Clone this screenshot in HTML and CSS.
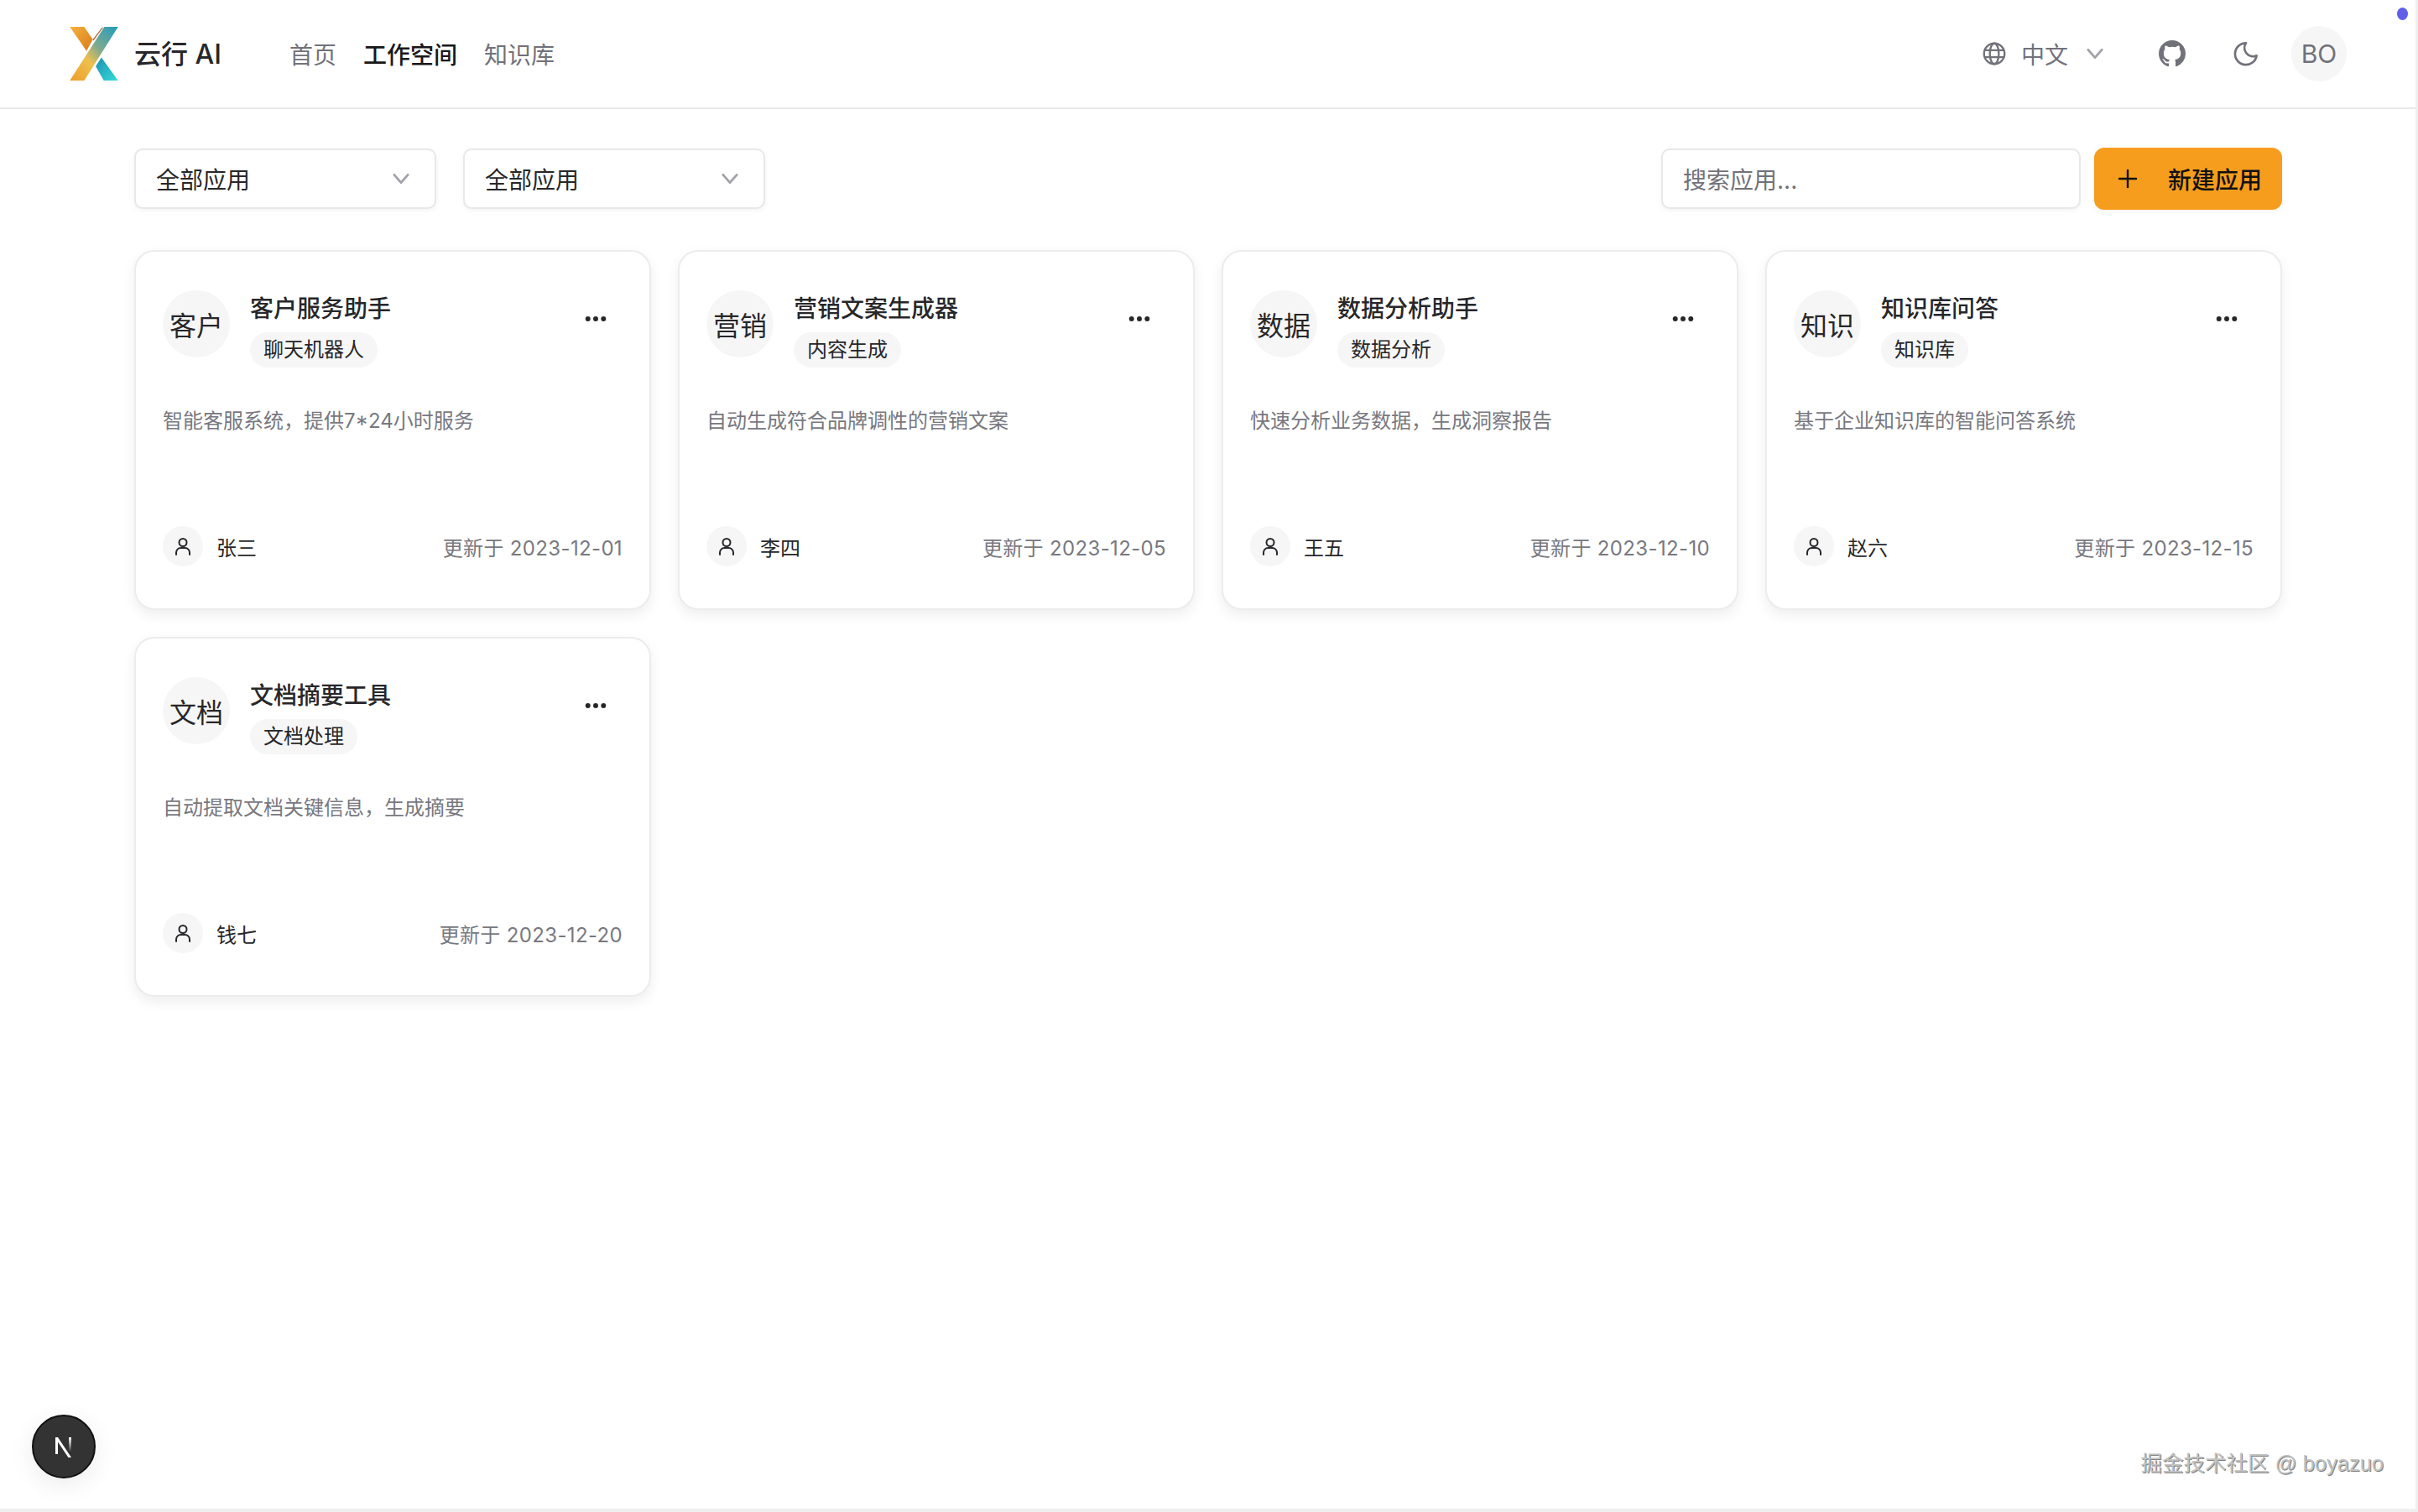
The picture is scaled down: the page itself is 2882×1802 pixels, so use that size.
FILE: index.html
```html
<!DOCTYPE html>
<html lang="zh-CN">
<head>
<meta charset="utf-8">
<title>云行 AI</title>
<link rel="stylesheet" href="styles.css">
</head>
<body>
<div class="page">
  <header class="header">
    <div class="brand">
      <svg class="logo" viewBox="0 0 168 187">
        <defs>
          <linearGradient id="lgA" x1="0" y1="0" x2="1" y2="1"><stop offset="0" stop-color="#f6b23a"/><stop offset="1" stop-color="#d87a1e"/></linearGradient>
          <linearGradient id="lgB" x1="1" y1="0" x2="0" y2="1"><stop offset="0" stop-color="#1f9cc0"/><stop offset=".4" stop-color="#7fa98e"/><stop offset=".62" stop-color="#eec04e"/><stop offset="1" stop-color="#eb9d2c"/></linearGradient>
          <linearGradient id="lgC" x1="0" y1="0" x2="1" y2="1"><stop offset="0" stop-color="#1d8fb4"/><stop offset="1" stop-color="#36dcd6"/></linearGradient>
        </defs>
        <polygon points="0,0 50,0 80,44 58,84" fill="url(#lgA)"/>
        <polygon points="120,0 168,0 50,187 0,187" fill="url(#lgB)"/>
        <polygon points="110,107 168,187 118,187 90,137" fill="url(#lgC)"/>
        <polygon points="112,2 116,2 82,48 80,44" fill="#a8672a"/>
      </svg>
      <span class="brand-name">云行 AI</span>
    </div>
    <nav class="nav">
      <a class="nav-link">首页</a>
      <a class="nav-link active">工作空间</a>
      <a class="nav-link">知识库</a>
    </nav>
    <div class="tools">
      <div class="lang">
        <svg class="icon-globe" viewBox="0 0 24 24" fill="none" stroke="currentColor" stroke-width="2"><circle cx="12" cy="12" r="10.5"/><ellipse cx="12" cy="12" rx="4.6" ry="10.5"/><path d="M2 8.5h20M2 15.5h20"/></svg>
        <span class="lang-text">中文</span>
        <svg class="chev chev-lang" viewBox="0 0 24 24" fill="none" stroke="currentColor" stroke-width="2.4" stroke-linecap="round" stroke-linejoin="round"><path d="M5 8l7 8 7-8"/></svg>
      </div>
      <svg class="icon-github" viewBox="0 0 16 16" fill="currentColor"><path d="M8 0C3.58 0 0 3.58 0 8c0 3.54 2.29 6.53 5.47 7.59.4.07.55-.17.55-.38 0-.19-.01-.82-.01-1.49-2.01.37-2.53-.49-2.69-.94-.09-.23-.48-.94-.82-1.13-.28-.15-.68-.52-.01-.53.63-.01 1.08.58 1.23.82.72 1.21 1.87.87 2.33.66.07-.52.28-.87.51-1.07-1.78-.2-3.64-.89-3.64-3.95 0-.87.31-1.59.82-2.15-.08-.2-.36-1.02.08-2.12 0 0 .67-.21 2.2.82.64-.18 1.32-.27 2-.27s1.36.09 2 .27c1.53-1.04 2.2-.82 2.2-.82.44 1.1.16 1.92.08 2.12.51.56.82 1.27.82 2.15 0 3.07-1.87 3.75-3.65 3.95.29.25.54.73.54 1.48 0 1.07-.01 1.93-.01 2.2 0 .21.15.46.55.38A8.01 8.01 0 0 0 16 8c0-4.42-3.58-8-8-8z"/></svg>
      <svg class="icon-moon" viewBox="0 0 24 24" fill="none" stroke="currentColor" stroke-width="2" stroke-linecap="round" stroke-linejoin="round"><path d="M12 2.5a7.6 7.6 0 0 0 9.5 11.2A9.7 9.7 0 1 1 12 2.5z"/></svg>
      <div class="me">BO</div>
    </div>
  </header>

  <main class="main">
    <div class="toolbar">
      <div class="filters">
        <div class="select"><span>全部应用</span><svg class="chev" viewBox="0 0 24 24" fill="none" stroke="currentColor" stroke-width="2.4" stroke-linecap="round" stroke-linejoin="round"><path d="M5 8l7 8 7-8"/></svg></div>
        <div class="select"><span>全部应用</span><svg class="chev" viewBox="0 0 24 24" fill="none" stroke="currentColor" stroke-width="2.4" stroke-linecap="round" stroke-linejoin="round"><path d="M5 8l7 8 7-8"/></svg></div>
      </div>
      <div class="actions">
        <div class="search">搜索应用...</div>
        <button class="new-btn"><svg class="icon-plus" viewBox="0 0 24 24" fill="none" stroke="currentColor" stroke-width="2.4" stroke-linecap="round"><path d="M12 2v20M2 12h20"/></svg><span>新建应用</span></button>
      </div>
    </div>

    <section class="grid">
      <article class="card">
        <div class="card-head">
          <div class="avatar">客户</div>
          <div class="info"><h3 class="title">客户服务助手</h3><span class="tag">聊天机器人</span></div>
          <svg class="more" viewBox="0 0 28 8" fill="currentColor"><circle cx="4" cy="4" r="3.2"/><circle cx="14" cy="4" r="3.2"/><circle cx="24" cy="4" r="3.2"/></svg>
        </div>
        <p class="desc">智能客服系统，提供7*24小时服务</p>
        <div class="card-foot">
          <div class="owner"><span class="owner-icon"><svg viewBox="0 0 24 24" fill="none" stroke="currentColor" stroke-width="2" stroke-linecap="round"><circle cx="12" cy="7.5" r="4.5"/><path d="M4 22v-2.5a5.5 5.5 0 0 1 5.5-5.5h5a5.5 5.5 0 0 1 5.5 5.5V22"/></svg></span><span>张三</span></div>
          <span class="date">更新于 2023-12-01</span>
        </div>
      </article>
      <article class="card">
        <div class="card-head">
          <div class="avatar">营销</div>
          <div class="info"><h3 class="title">营销文案生成器</h3><span class="tag">内容生成</span></div>
          <svg class="more" viewBox="0 0 28 8" fill="currentColor"><circle cx="4" cy="4" r="3.2"/><circle cx="14" cy="4" r="3.2"/><circle cx="24" cy="4" r="3.2"/></svg>
        </div>
        <p class="desc">自动生成符合品牌调性的营销文案</p>
        <div class="card-foot">
          <div class="owner"><span class="owner-icon"><svg viewBox="0 0 24 24" fill="none" stroke="currentColor" stroke-width="2" stroke-linecap="round"><circle cx="12" cy="7.5" r="4.5"/><path d="M4 22v-2.5a5.5 5.5 0 0 1 5.5-5.5h5a5.5 5.5 0 0 1 5.5 5.5V22"/></svg></span><span>李四</span></div>
          <span class="date">更新于 2023-12-05</span>
        </div>
      </article>
      <article class="card">
        <div class="card-head">
          <div class="avatar">数据</div>
          <div class="info"><h3 class="title">数据分析助手</h3><span class="tag">数据分析</span></div>
          <svg class="more" viewBox="0 0 28 8" fill="currentColor"><circle cx="4" cy="4" r="3.2"/><circle cx="14" cy="4" r="3.2"/><circle cx="24" cy="4" r="3.2"/></svg>
        </div>
        <p class="desc">快速分析业务数据，生成洞察报告</p>
        <div class="card-foot">
          <div class="owner"><span class="owner-icon"><svg viewBox="0 0 24 24" fill="none" stroke="currentColor" stroke-width="2" stroke-linecap="round"><circle cx="12" cy="7.5" r="4.5"/><path d="M4 22v-2.5a5.5 5.5 0 0 1 5.5-5.5h5a5.5 5.5 0 0 1 5.5 5.5V22"/></svg></span><span>王五</span></div>
          <span class="date">更新于 2023-12-10</span>
        </div>
      </article>
      <article class="card">
        <div class="card-head">
          <div class="avatar">知识</div>
          <div class="info"><h3 class="title">知识库问答</h3><span class="tag">知识库</span></div>
          <svg class="more" viewBox="0 0 28 8" fill="currentColor"><circle cx="4" cy="4" r="3.2"/><circle cx="14" cy="4" r="3.2"/><circle cx="24" cy="4" r="3.2"/></svg>
        </div>
        <p class="desc">基于企业知识库的智能问答系统</p>
        <div class="card-foot">
          <div class="owner"><span class="owner-icon"><svg viewBox="0 0 24 24" fill="none" stroke="currentColor" stroke-width="2" stroke-linecap="round"><circle cx="12" cy="7.5" r="4.5"/><path d="M4 22v-2.5a5.5 5.5 0 0 1 5.5-5.5h5a5.5 5.5 0 0 1 5.5 5.5V22"/></svg></span><span>赵六</span></div>
          <span class="date">更新于 2023-12-15</span>
        </div>
      </article>
      <article class="card">
        <div class="card-head">
          <div class="avatar">文档</div>
          <div class="info"><h3 class="title">文档摘要工具</h3><span class="tag">文档处理</span></div>
          <svg class="more" viewBox="0 0 28 8" fill="currentColor"><circle cx="4" cy="4" r="3.2"/><circle cx="14" cy="4" r="3.2"/><circle cx="24" cy="4" r="3.2"/></svg>
        </div>
        <p class="desc">自动提取文档关键信息，生成摘要</p>
        <div class="card-foot">
          <div class="owner"><span class="owner-icon"><svg viewBox="0 0 24 24" fill="none" stroke="currentColor" stroke-width="2" stroke-linecap="round"><circle cx="12" cy="7.5" r="4.5"/><path d="M4 22v-2.5a5.5 5.5 0 0 1 5.5-5.5h5a5.5 5.5 0 0 1 5.5 5.5V22"/></svg></span><span>钱七</span></div>
          <span class="date">更新于 2023-12-20</span>
        </div>
      </article>
    </section>
  </main>

  <div class="blue-dot"></div>
  <div class="next-badge">
    <svg viewBox="0 0 32 32" class="next-n"><defs><linearGradient id="nfade" x1="0" y1="0" x2="0" y2="1"><stop offset="0" stop-color="#fff"/><stop offset="1" stop-color="#fff" stop-opacity="0"/></linearGradient></defs><path d="M6 5h3l16 24h-3.6L9 10.5V25H6z" fill="#fff"/><rect x="22" y="5" width="3" height="17" fill="url(#nfade)"/></svg>
  </div>
  <div class="watermark">掘金技术社区 @ boyazuo</div>
</div>
</body>
</html>
```
FILE: styles.css
```css
* { box-sizing: border-box; }
html, body { margin: 0; padding: 0; height: 100%; background: #efefef; }
body { font-family: Inter, "Noto Sans CJK SC", sans-serif; color: #27272a; overflow: hidden; }
.page { position: relative; width: 2879px; height: 1798px; background: #fff; overflow: hidden; }

.header { height: 130px; border-bottom: 2px solid #e8e8ea; display: flex; align-items: center; padding: 0 82px 0 83px; }
.brand { display: flex; align-items: center; gap: 19px; }
.logo { width: 58px; height: 64px; display: block; }
.brand-name { font-size: 32px; font-weight: 500; color: #27272a; white-space: nowrap; position: relative; top: -2px; }
.nav { display: flex; gap: 32px; margin-left: 81px; }
.nav-link { font-size: 28px; color: #71717a; }
.nav-link.active { color: #18181b; font-weight: 500; }

.tools { margin-left: auto; display: flex; align-items: center; }
.lang { display: flex; align-items: center; color: #71717a; font-size: 28px; }
.icon-globe { width: 28px; height: 28px; margin-right: 18px; }
.chev { width: 28px; height: 28px; color: #a1a1aa; display: block; }
.chev-lang { margin-left: 18px; }
.icon-github { width: 32px; height: 32px; color: #71717a; margin-left: 62px; }
.icon-moon { width: 32px; height: 32px; color: #71717a; margin-left: 56px; }
.me { width: 66px; height: 66px; border-radius: 50%; background: #f6f6f7; color: #71717a; font-size: 30px; display: flex; align-items: center; justify-content: center; margin-left: 38px; }

.main { padding: 46px 159px 0 160px; }
.toolbar { display: flex; justify-content: space-between; align-items: center; }
.filters { display: flex; gap: 32px; }
.select { width: 360px; height: 72px; border: 2px solid #e8e8ea; border-radius: 10px; background: #fff; box-shadow: 0 2px 6px rgba(0,0,0,.05); display: flex; align-items: center; justify-content: space-between; padding: 0 26px 0 24px; font-size: 28px; color: #27272a; }
.actions { display: flex; align-items: center; gap: 16px; }
.search { width: 500px; height: 72px; border: 2px solid #e8e8ea; border-radius: 10px; background: #fff; box-shadow: 0 2px 6px rgba(0,0,0,.05); display: flex; align-items: center; padding: 0 24px; font-size: 28px; color: #71717a; }
.new-btn { width: 224px; height: 74px; border: 0; border-radius: 12px; background: #f69d1d; color: #111; font: 500 28px Inter, "Noto Sans CJK SC", sans-serif; display: flex; align-items: center; justify-content: space-between; padding: 0 24px 0 28px; box-shadow: 0 2px 6px rgba(0,0,0,.05); }
.icon-plus { width: 24px; height: 24px; display: block; }

.grid { display: grid; grid-template-columns: repeat(4, 1fr); gap: 32px; margin-top: 48px; }
.card { height: 429px; border: 2px solid #ececee; border-radius: 24px; background: #fff; box-shadow: 0 6px 16px rgba(0,0,0,.07); padding: 48px 32px 50px; display: flex; flex-direction: column; }
.card-head { display: flex; align-items: flex-start; }
.avatar { width: 80px; height: 80px; flex: none; border-radius: 50%; background: #f6f6f7; display: flex; align-items: center; justify-content: center; font-size: 32px; color: #27272a; margin-top: -2px; }
.info { margin-left: 24px; display: flex; flex-direction: column; align-items: flex-start; gap: 8px; }
.title { margin: 0; font-size: 28px; line-height: 40px; font-weight: 500; color: #27272a; white-space: nowrap; }
.tag { background: #f6f6f7; border-radius: 22px; font-size: 24px; line-height: 42px; padding: 0 16px; color: #27272a; white-space: nowrap; }
.more { width: 26px; height: 8px; margin-left: auto; margin-right: 19px; margin-top: 28px; color: #27272a; flex: none; }
.desc { margin: 46px 0 0; font-size: 24px; line-height: 36px; color: #78787f; }
.card-foot { margin-top: auto; display: flex; justify-content: space-between; align-items: center; font-size: 24px; }
.owner { display: flex; align-items: center; gap: 16px; color: #27272a; }
.owner-icon { width: 48px; height: 48px; border-radius: 50%; background: #f6f6f7; display: flex; align-items: center; justify-content: center; }
.owner-icon svg { width: 24px; height: 24px; }
.date { color: #78787f; letter-spacing: .35px; }

.blue-dot { position: absolute; left: 2857px; top: 9px; width: 13px; height: 15px; border-radius: 50%; background: #5f5fe8; }
.next-badge { position: absolute; left: 38px; top: 1686px; width: 76px; height: 76px; border-radius: 50%; background: #333; border: 2px solid #111; box-shadow: 0 8px 30px rgba(0,0,0,.08); display: flex; align-items: center; justify-content: center; }
.next-n { width: 32px; height: 32px; }
.watermark { position: absolute; right: 38px; top: 1723px; font-family: "Liberation Sans", "Noto Sans CJK SC", sans-serif; font-size: 25.5px; color: #c2c2c2; text-shadow: 1px 1px 0 #808080; white-space: nowrap; }
```
